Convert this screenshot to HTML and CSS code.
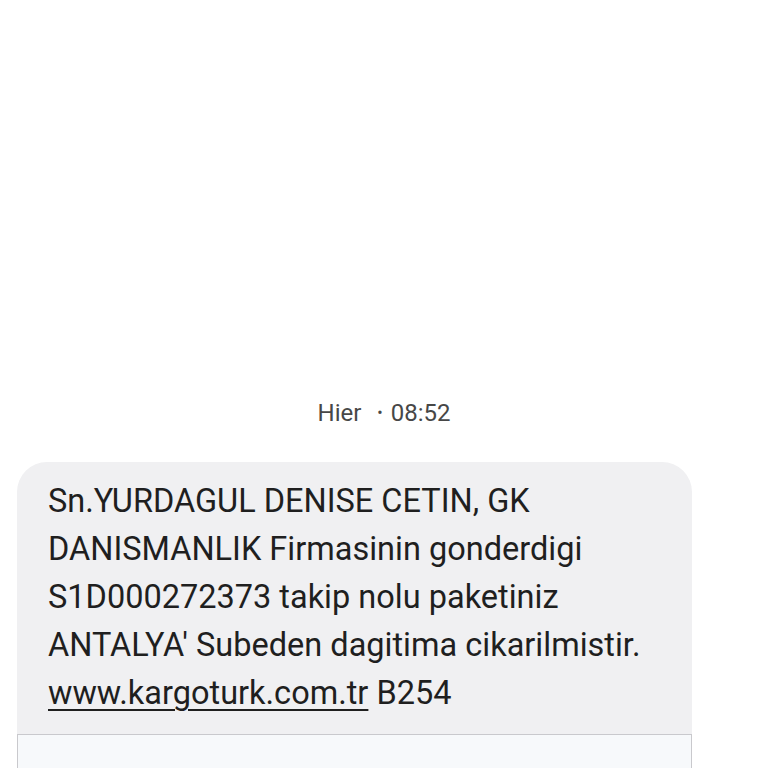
FILE: index.html
```html
<!DOCTYPE html>
<html lang="tr">
<head>
    <meta charset="UTF-8">
    <meta name="viewport" content="width=device-width, initial-scale=1.0">
    <title>Mesaj</title>
    <link rel="stylesheet" href="styles.css">
</head>
<body>
    <div class="thread">
        <div class="timestamp">Hier <span class="dot">•</span> 08:52</div>

        <div class="bubble">
            <p class="message">Sn.YURDAGUL DENISE CETIN, GK DANISMANLIK Firmasinin gonderdigi S1D000272373 takip nolu paketiniz ANTALYA' Subeden dagitima cikarilmistir. <a href="#" class="link">www.kargoturk.com.tr</a> B254</p>
            <div class="preview"></div>
        </div>
    </div>
</body>
</html>
```

FILE: styles.css
```css
* {
    box-sizing: border-box;
}

body {
    margin: 0;
    background-color: #ffffff;
    font-family: Roboto, 'Noto Sans', sans-serif;
    overflow: hidden;
}

.thread {
    padding-top: 396px;
    height: 768px;
}

.timestamp {
    text-align: center;
    color: #474747;
    font-size: 24px;
    line-height: 34px;
}

.dot {
    font-size: 16px;
    margin: 0 2px 0 10px;
    position: relative;
    top: -3px;
}

.bubble {
    margin: 29px 0 0 17px;
    width: 675px;
    background-color: #f0f0f2;
    border-radius: 30px 30px 0 0;
    overflow: hidden;
}

.message {
    margin: 0;
    padding: 15px 27px 17px 31px;
    font-size: 32.5px;
    line-height: 48px;
    color: #1f1f1f;
}

.link {
    color: #1f1f1f;
    text-decoration: underline;
    text-decoration-thickness: 2px;
    text-underline-offset: 5px;
}

.preview {
    height: 60px;
    background-color: #f7f9fb;
    border: 1px solid #c9c9cd;
    border-bottom: none;
}
```
